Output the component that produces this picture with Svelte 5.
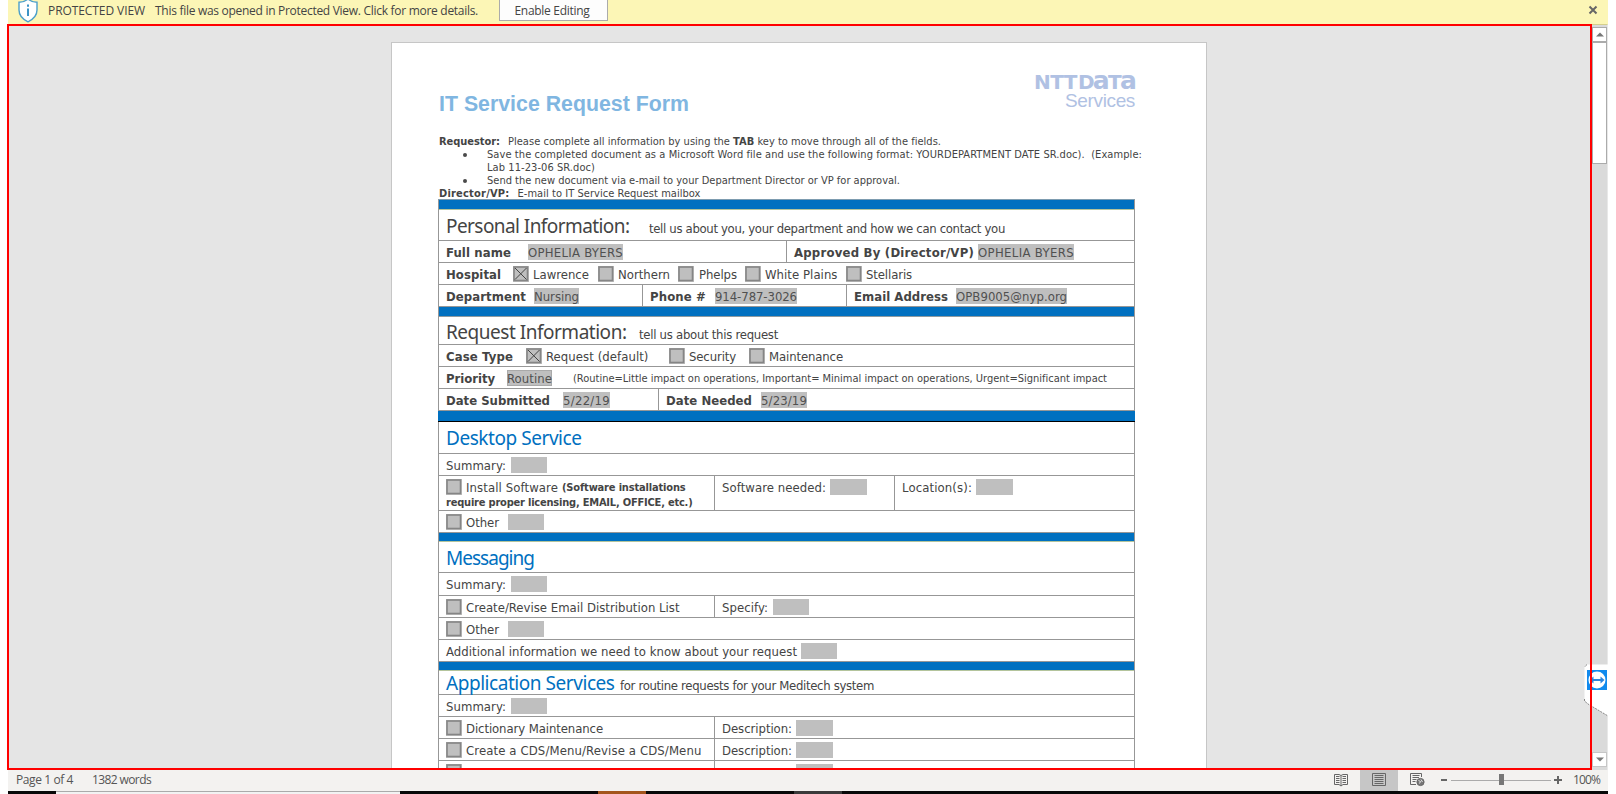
<script>
  // Builds a flow item: kind, text, start and end on the sheet's ruler.
  const t = (text, a, b) => ({ k: 't', text, a, b });
  const b = (text, a, e) => ({ k: 'b', text, a, b: e });
  const s = (text, a, e) => ({ k: 's', text, a, b: e });
  const sb = (text, a, e) => ({ k: 'sb', text, a, b: e });
  const f = (text, a, e) => ({ k: 'f', text, a, b: e });
  const c = (a, on = false) => ({ k: 'c', on, a, b: a + 16 });
  const h = (text, a, e) => ({ k: 'h', text, a, b: e });
  const hb = (text, a, e) => ({ k: 'hb', text, a, b: e });

  const cell = (from, to, ...lines) => ({
    from, to,
    lines: lines.map((line) => {
      let x = from + 7;
      return line.map((it) => {
        const o = { ...it, gap: it.a - x, w: it.b - it.a };
        x = it.b;
        return o;
      });
    })
  });
  const L = 439, R = 1134;
  const band = (height, edge) => ({ band: true, height, edge });
  const row = (height, ...cells) => ({ height, cells });
  const one = (height, ...items) => row(height, cell(L, R, items));
  const head = (height, base, ...items) => ({ height, base, cells: [cell(L, R, items)] });

  const rows = [
    band(10, 'tint'),
    head(31, 23, h('Personal Information:', 446, 629.5), t('tell us about you, your department and how we can contact you', 649, 1005)),
    row(22, cell(L, 786, [b('Full name', 446, 511), f('OPHELIA BYERS', 528, 623)]),
      cell(787, R, [b('Approved By (Director/VP)', 794, 974), f('OPHELIA BYERS', 978, 1074)])),
    one(22, b('Hospital', 446, 501), c(513, true), t('Lawrence', 533, 589), c(598), t('Northern', 618, 670), c(678),
      t('Phelps', 699, 737), c(745), t('White Plains', 765, 837.5), c(846), t('Stellaris', 866, 912)),
    row(22, cell(L, 642, [b('Department', 446, 526), f('Nursing', 534, 579)]),
      cell(643, 846, [b('Phone #', 650, 706), f('914-787-3026', 715, 797)]),
      cell(847, R, [b('Email Address', 854, 948), f('OPB9005@nyp.org', 956, 1067)])),
    band(10),
    head(28, 22, h('Request Information:', 446, 626.5), t('tell us about this request', 639, 778)),
    one(22, b('Case Type', 446, 513), c(526, true), t('Request (default)', 546, 648.5), c(669), t('Security', 689, 736), c(749), t('Maintenance', 769, 843)),
    one(22, b('Priority', 446, 495), { ...f('Routine', 507, 552), edge: true },
      s('(Routine=Little impact on operations, Important= Minimal impact on operations, Urgent=Significant impact', 573, 1107)),
    row(22, cell(L, 658, [b('Date Submitted', 446, 550), f('5/22/19', 563, 610)]),
      cell(659, R, [b('Date Needed', 666, 752), f('5/23/19', 761, 807)])),
    band(11, 'dark'),
    head(32, 23, hb('Desktop Service', 446, 581.5)),
    one(22, t('Summary:', 446, 506), f('', 511, 547)),
    row(35, cell(L, 714, [c(446), t('Install Software', 466, 558), sb('(Software installations', 562, 685.5)],
        [sb('require proper licensing, EMAIL, OFFICE, etc.)', 446, 692.5)]),
      cell(715, 894, [t('Software needed:', 722, 826), f('', 830, 867)]),
      cell(895, R, [t('Location(s):', 902, 972), f('', 976, 1013)])),
    one(22, c(446), t('Other', 466, 499), f('', 508, 544)),
    band(9, 'tint'),
    head(31, 23, hb('Messaging', 446, 534)),
    one(23, t('Summary:', 446, 506), f('', 511, 547)),
    row(22, cell(L, 714, [c(446), t('Create/Revise Email Distribution List', 466, 679.5)]), cell(715, R, [t('Specify:', 722, 768), f('', 773, 809)])),
    one(22, c(446), t('Other', 466, 499), f('', 508, 544)),
    one(22, t('Additional information we need to know about your request', 446, 797), f('', 801, 837)),
    band(9, 'tint'),
    head(24, 19, hb('Application Services', 446, 614.5), t('for routine requests for your Meditech system', 620, 874)),
    one(22, t('Summary:', 446, 506), f('', 511, 547)),
    row(22, cell(L, 714, [c(446), t('Dictionary Maintenance', 466, 603)]), cell(715, R, [t('Description:', 722, 792), f('', 796, 833)])),
    row(22, cell(L, 714, [c(446), t('Create a CDS/Menu/Revise a CDS/Menu', 466, 701.5)]), cell(715, R, [t('Description:', 722, 792), f('', 796, 833)])),
    row(22, cell(L, 714, [c(446), t('Corrected Problem Solving', 466, 625)]), cell(715, R, [t('Description:', 722, 792), f('', 796, 833)]))
  ];

  // Spreads a run of text evenly over the width reserved for it.
  function fit(node, width) {
    const n = [...node.textContent].length;
    if (!n) return;
    const natural = node.getBoundingClientRect().width;
    node.style.letterSpacing = `${(width - natural) / n}px`;
  }
</script>

<div class="app">
  <header class="notice">
    <svg class="shield" width="20" height="23" viewBox="0 0 20 23">
      <path d="M10 -1 C7.5 1.2 4 2.2 1 2.2 V10 C1 15.5 5 19.4 10 21.8 C15 19.4 19 15.5 19 10 V2.2 C16 2.2 12.5 1.2 10 -1Z" fill="#fff" stroke="#4b9fca" stroke-width="1.4" />
      <path d="M9 4.5h2v2.3H9zM9 8.5h2v7.5H9z" fill="#3d94c6" />
    </svg>
    <span class="pv" use:fit={97}>PROTECTED VIEW</span>
    <span class="msg" use:fit={323}>This file was opened in Protected View. Click for more details.</span>
    <button><span use:fit={75}>Enable Editing</span></button>
    <svg class="close" width="10" height="10" viewBox="0 0 10 10"><path d="M1.5 1.5l7 7M8.5 1.5l-7 7" stroke="#666" stroke-width="2" /></svg>
  </header>

  <div class="work">
    <main class="canvas">
      <article class="sheet">
        <div class="top">
          <h1><span use:fit={250}>IT Service Request Form</span></h1>
          <div class="logo">
            <div class="ntt"><span use:fit={43}>NTT</span><span class="data" use:fit={57}>D<i>a</i>T<i>a</i></span></div>
            <div class="serv"><span use:fit={70}>Services</span></div>
          </div>
        </div>
        <div class="intro">
          <p><b use:fit={61}>Requestor:</b><span class="after" use:fit={433}>Please complete all information by using the <b>TAB</b> key to move through all of the fields.</span></p>
          <p class="li"><i class="dot"></i><span use:fit={655}>Save the completed document as a Microsoft Word file and use the following format: YOURDEPARTMENT DATE SR.doc).&nbsp; (Example:</span></p>
          <p class="li"><i class="dot none"></i><span use:fit={108}>Lab 11-23-06 SR.doc)</span></p>
          <p class="li"><i class="dot"></i><span use:fit={413}>Send the new document via e-mail to your Department Director or VP for approval.</span></p>
          <p><b use:fit={70.5}>Director/VP:</b><span class="after" use:fit={183}>E-mail to IT Service Request mailbox</span></p>
        </div>
        <div class="form">
          {#each rows as r}
            {#if r.band}
              <div class="band {r.edge ?? ''}" style="height:{r.height}px"></div>
            {:else}
              <div class="row" class:head={r.base} style="height:{r.height}px">
                {#each r.cells as cl, i}
                  <div class="cell" class:div={i > 0} style="width:{cl.to - cl.from + (i > 0 ? 1 : 0)}px">
                    {#each cl.lines as line}
                      <div class="line" style={r.base ? `padding-top:${Math.max(0, r.base - 20)}px;margin-top:${Math.min(0, r.base - 20)}px` : ''}>
                        {#each line as it}
                          {#if it.k === 'c'}
                            <span class="check" style="margin-left:{it.gap}px">
                              <svg width="16" height="16" viewBox="0 0 16 16">
                                <rect width="16" height="16" fill="#bfbfbf" />
                                <rect x="1" y="1" width="13.5" height="13.5" fill="none" stroke="#858585" stroke-width="1.6" />
                                {#if it.on}<path d="M2 2l11.500 11.500M13.500 2l-11.500 11.500" stroke="#444" stroke-width="1" />{/if}
                              </svg>
                            </span>
                          {:else}
                            <span class="run {it.k}" class:edge={it.edge} style="margin-left:{it.gap}px;width:{it.w}px"><span use:fit={it.w}>{it.text}</span></span>
                          {/if}
                        {/each}
                      </div>
                    {/each}
                  </div>
                {/each}
              </div>
            {/if}
          {/each}
        </div>
      </article>
    </main>
    <aside class="scroll">
      <div class="arrow"><svg width="8" height="5" viewBox="0 0 8 5"><path d="M0 4.500L4 0.500L8 4.500Z" fill="#777" /></svg></div>
      <div class="thumb"></div>
      <div class="arrow down"><svg width="8" height="5" viewBox="0 0 8 5"><path d="M0 0.500L4 4.500L8 0.500Z" fill="#777" /></svg></div>
    </aside>
    <svg class="viewer" width="24" height="54" viewBox="0 0 24 54">
      <path d="M24 0.500H3L0.500 3V36L4 40L24 52Z" fill="#fff" />
      <path d="M3 0.500L0.500 3M0.500 35V37L4 40L24 52" fill="none" stroke="#888" stroke-width="1" stroke-dasharray="2 1" />
      <rect x="3" y="6" width="20" height="20" fill="#118bee" />
      <circle cx="13" cy="16" r="8.500" fill="#fff" />
      <path d="M5.500 16L9.500 12.500V15H16.500V12.500L20.500 16L16.500 19.500V17H9.500V19.500Z" fill="#2c85dc" />
    </svg>
    <div class="frame"></div>
  </div>

  <footer class="status">
    <span class="pg" use:fit={57}>Page 1 of 4</span>
    <span class="wc" use:fit={59}>1382 words</span>
    <div class="tools">
      <span class="tool"><svg width="14" height="14" viewBox="0 0 14 14" fill="none" stroke="#666"><path d="M.5 1.500H5L7 2.500L9 1.500H13.500V11.500H9L7 13L5 11.500H.5ZM7 2.500V13M2 3.500H5.500M2 5.500H5.500M2 7.500H5.500M2 9.500H5.500M8.500 3.500H12M8.500 5.500H12M8.500 7.500H12M8.500 9.500H12" /></svg></span>
      <span class="tool on"><svg width="14" height="14" viewBox="0 0 14 14" fill="none" stroke="#666"><path d="M.5 .5H13.500V12.500H.5ZM2.500 2.500H11.500M2.500 4.500H11.500M2.500 6.500H11.500M2.500 8.500H11.500M2.500 10.500H11.500" /></svg></span>
      <span class="tool"><svg width="15" height="14" viewBox="0 0 15 14" fill="none" stroke="#666"><path d="M6 11.500H.5V.5H11.500V4M2.500 2.500H9.500M2.500 4.500H9M2.500 6.500H6.500M2.500 8.500H5.500" /><circle cx="10.500" cy="9" r="3.600" fill="#777" /><path d="M8.500 7.500L10.500 8.500L9.500 10.500M11 6.500L12.500 9" stroke="#eee" stroke-width=".9" /></svg></span>
    </div>
    <i class="minus"></i>
    <div class="track"><i></i></div>
    <svg class="plus" width="8" height="8" viewBox="0 0 8 8"><path d="M4 0V8M0 4H8" stroke="#666" stroke-width="2" /></svg>
    <span class="pct" use:fit={27}>100%</span>
  </footer>
  <div class="taskbar"><i class="a"></i><i class="w"></i><i class="k1"></i><i class="o"></i><i class="k2"></i><i class="g"></i></div>
</div>

<style>
  :global(body) { background: #fff; overflow: hidden; }
  .app { width: 1600px; height: 794px; margin-left: 8px; overflow: visible; display: flex; flex-direction: column; font-family: "Open Sans", "Noto Sans", sans-serif; font-size: 12px; color: #444; white-space: pre; }
  .app > * { flex: none; white-space: nowrap; }
  .notice { height: 24px; background: #fcf6b6; display: flex; align-items: flex-start; line-height: 17px; }
  .shield { margin-left: 10px; flex: none; }
  .notice > span { padding-top: 2px; }
  .pv { margin-left: 10px; }
  .msg { margin-left: 10px; }
  .notice button { margin: -4px 0 0 21px; width: 109px; height: 25px; padding: 4px 3px 0 0; border: 1px solid #ababab; background: #fdfdfd; font: inherit; line-height: 17px; color: #444; box-sizing: border-box; }
  .notice button span { display: inline-block; }
  .close { margin: 5px 10px 0 auto; }

  .work { height: 746px; position: relative; display: flex; background: #e5e5e5; }
  .canvas { width: 1584px; height: 746px; overflow: hidden; display: flex; }
  .frame { position: absolute; left: -1px; top: 0; width: 1585px; height: 746px; box-sizing: border-box; border: 2px solid #f00; }
  .sheet { box-sizing: border-box; width: 816px; height: 900px; margin: 18px 0 0 383px; border: 1px solid #c6c6c6; background: #fff; padding: 0 0 0 46px; display: flex; flex-direction: column; font-family: "DejaVu Sans Condensed", "DejaVu Sans", sans-serif; font-stretch: condensed; color: #444; }
  .top { height: 92px; display: flex; justify-content: space-between; width: 697px; padding-left: 1px; box-sizing: border-box; flex: none; }
  h1 { margin: 49px 0 0; font: bold 21.300px/24px "Liberation Sans", Arial, sans-serif; color: #80b6e1; }
  h1 span, .logo span { display: inline-block; }
  .logo { width: 101px; padding-top: 28px; color: #b0c1e3; }
  .ntt { display: flex; align-items: baseline; justify-content: space-between; height: 22px; font: bold 20px/22px "DejaVu Sans", sans-serif; }
  .ntt i { font-style: normal; font-size: 25px; line-height: 0; }
  .serv { text-align: right; font: 300 19px/20px "Liberation Sans", Arial, sans-serif; margin-top: -2px; }
  .intro { padding-left: 1px; font-size: 11px; flex: none; height: 64px; }
  .intro p { margin: 0; height: 13px; line-height: 13px; display: flex; }
  .intro p > b, .intro p > span { flex: none; }
  .after { margin-left: 8px; }
  .dot { width: 4px; height: 4px; border-radius: 50%; background: #4a4a4a; margin: 5px 20px 0 24px; flex: none; }
  .dot.none { visibility: hidden; }

  .form { width: 697px; box-sizing: border-box; border: 1px solid #979797; border-top-color: #7d9cb0; flex: none; font-size: 13px; }
  .band { background: #0070c0; border-bottom: 1px solid #8d9aa0; box-sizing: border-box; }
  .band.tint { border-bottom-color: #b4c49c; }
  .band.dark { border-bottom-color: #000; margin: 0 -1px; }
  .row { display: flex; box-sizing: border-box; border-bottom: 1px solid #979797; }
  .cell { box-sizing: border-box; padding: 3px 0 0 7px; flex: none; }
  .cell.div { border-left: 1px solid #979797; }
  .head .cell { padding-top: 0; }
  .line { display: flex; height: 16px; line-height: 18px; }
  .line + .line { height: 14px; line-height: 16px; }
  .row:last-child .line { line-height: 20px; }
  .head .line { height: 26px; line-height: 26px; align-items: baseline; }
  .run { flex: none; height: 16px; white-space: nowrap; }
  .head .run { height: auto; }
  .run > span { display: inline-block; }
  .b, .sb { font-weight: bold; }
  .s, .sb { font-size: 11px; }
  .f { background: #bfbfbf; color: #505050; }
  .edge { box-shadow: inset 0 0 0 1px #a9a9a9; }
  .h, .hb { font-family: "Noto Sans", sans-serif; font-stretch: normal; font-size: 19px; }
  .hb { color: #0070c0; }
  .check { flex: none; width: 16px; height: 16px; }
  .check svg { display: block; }

  .scroll { width: 16px; background: #dadada; border-right: 1px solid #e8e8e8; border-top: 1px solid #d5cf8c; box-sizing: border-box; display: flex; flex-direction: column; padding-top: 2px; }
  .arrow { box-sizing: border-box; width: 15px; height: 15px; border: 1px solid #ababab; background: #fff; display: flex; align-items: center; justify-content: center; flex: none; }
  .thumb { box-sizing: border-box; width: 15px; height: 122px; border: 1px solid #ababab; background: #fff; }
  .down { margin-top: auto; margin-bottom: 3px; border-color: #c6c6c6; }
  .viewer { position: absolute; left: 1576px; top: 640px; }

  .status { height: 21px; background: #f3f2f0; display: flex; line-height: 19px; color: #555; }
  .pg { margin-left: 8px; }
  .wc { margin-left: 19px; }
  .tools { display: flex; margin-left: auto; }
  .tool { width: 38px; height: 21px; display: flex; align-items: flex-start; padding-top: 3px; box-sizing: border-box; justify-content: center; }
  .tool.on { background: #c6c6c6; }
  .minus { width: 6px; height: 2px; background: #666; margin: 9px 4px 0 5px; }
  .track { width: 100px; height: 1px; background: #ababab; margin-top: 10px; }
  .track i { display: block; width: 5px; height: 11px; background: #777; margin: -6px 0 0 48px; }
  .plus { margin: 6px 11px 0 3px; }
  .pct { margin-right: 8px; }
  .taskbar { height: 3px; display: flex; background: #080808; }
  .a { width: 48px; }
  .w { width: 344px; background: #f2f2f2; border-top: 1px solid #aaa; box-sizing: border-box; }
  .k1 { width: 198px; }
  .o { width: 48px; background: #a4551c; }
  .k2 { width: 148px; }
  .g { width: 48px; background: #3a3a3a; }
</style>
